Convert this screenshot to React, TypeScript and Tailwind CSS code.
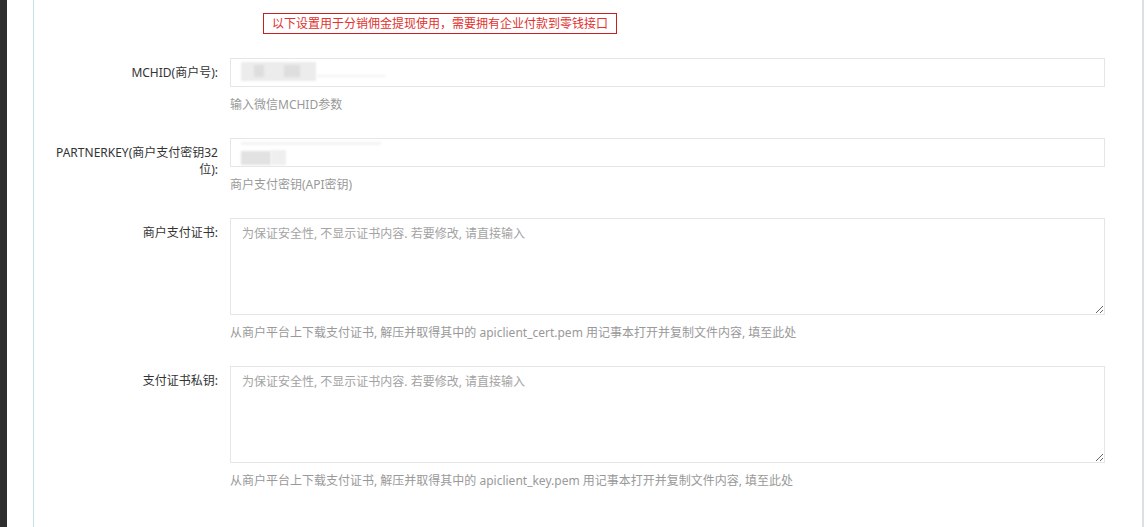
import React from "react";

const font = { fontFamily: '"Noto Sans", "Noto Sans CJK SC", sans-serif' };

function Row({
  label,
  help,
  children,
}: {
  label: string;
  help: string;
  children: React.ReactNode;
}) {
  return (
    <div className="flex mb-[25px]">
      <div className="w-[196px] shrink-0 pl-[13px] pr-[12px] pt-[6px] text-right text-[12px] leading-[17px] text-[#333]">
        {label}
      </div>
      <div className="w-[875px] shrink-0">
        {children}
        <div className="mt-[9px] h-[17px] text-[12px] leading-[17px] text-[#999]">{help}</div>
      </div>
    </div>
  );
}

function FakeInput({ children }: { children?: React.ReactNode }) {
  return (
    <div className="relative h-[29px] w-full border border-[#e5e6e7] bg-white">{children}</div>
  );
}

function Area({ placeholder }: { placeholder: string }) {
  return (
    <textarea
      readOnly
      placeholder={placeholder}
      className="block h-[97px] w-full border border-[#e5e6e7] bg-white px-[11px] py-[6px] text-[12px] leading-[17px] text-[#333] placeholder:text-[#a3a3a3] outline-none"
      style={font}
    />
  );
}

export default function App() {
  return (
    <div className="flex h-[527px] w-full overflow-hidden bg-white" style={font}>
      <div className="w-[7px] shrink-0 bg-[#2e2e2e]" />
      <div className="w-[26px] shrink-0 bg-white" />
      <div className="w-px shrink-0 bg-[#c6e4ef]" />
      <div className="w-[1108px] shrink-0">
        <div className="flex pt-[13px] pl-[229px]">
          <div className="flex h-[21px] items-center border border-[#c81e1e] px-[8px] text-[12px] leading-[17px] text-[#e0322f]">
            以下设置用于分销佣金提现使用，需要拥有企业付款到零钱接口
          </div>
        </div>
        <div className="mt-[24px]">
          <Row label="MCHID(商户号):" help="输入微信MCHID参数">
            <FakeInput>
              <div className="absolute left-[10px] top-[3px] h-[19px] w-[75px] bg-[#ececec] blur-[1px]" />
              <div className="absolute left-[23px] top-[6px] h-[12px] w-[10px] bg-[#dedede] blur-[1px]" />
              <div className="absolute left-[53px] top-[6px] h-[12px] w-[16px] bg-[#dedede] blur-[1px]" />
              <div className="absolute left-[85px] top-[16px] h-[2px] w-[70px] bg-[#f4f4f4] blur-[1px]" />
            </FakeInput>
          </Row>
          <Row label="PARTNERKEY(商户支付密钥32位):" help="商户支付密钥(API密钥)">
            <FakeInput>
              <div className="absolute left-[10px] top-[3px] h-[3px] w-[140px] bg-[#f3f3f3] blur-[1px]" />
              <div className="absolute left-[10px] top-[12px] h-[14px] w-[30px] bg-[#e2e2e2] blur-[1px]" />
              <div className="absolute left-[40px] top-[11px] h-[15px] w-[15px] bg-[#efefef] blur-[1px]" />
            </FakeInput>
          </Row>
          <Row
            label="商户支付证书:"
            help="从商户平台上下载支付证书, 解压并取得其中的 apiclient_cert.pem 用记事本打开并复制文件内容, 填至此处"
          >
            <Area placeholder="为保证安全性, 不显示证书内容. 若要修改, 请直接输入" />
          </Row>
          <Row
            label="支付证书私钥:"
            help="从商户平台上下载支付证书, 解压并取得其中的 apiclient_key.pem 用记事本打开并复制文件内容, 填至此处"
          >
            <Area placeholder="为保证安全性, 不显示证书内容. 若要修改, 请直接输入" />
          </Row>
        </div>
      </div>
      <div className="w-[2px] shrink-0 bg-[#dadfe8]" />
      <div className="flex-1 bg-white" />
    </div>
  );
}
